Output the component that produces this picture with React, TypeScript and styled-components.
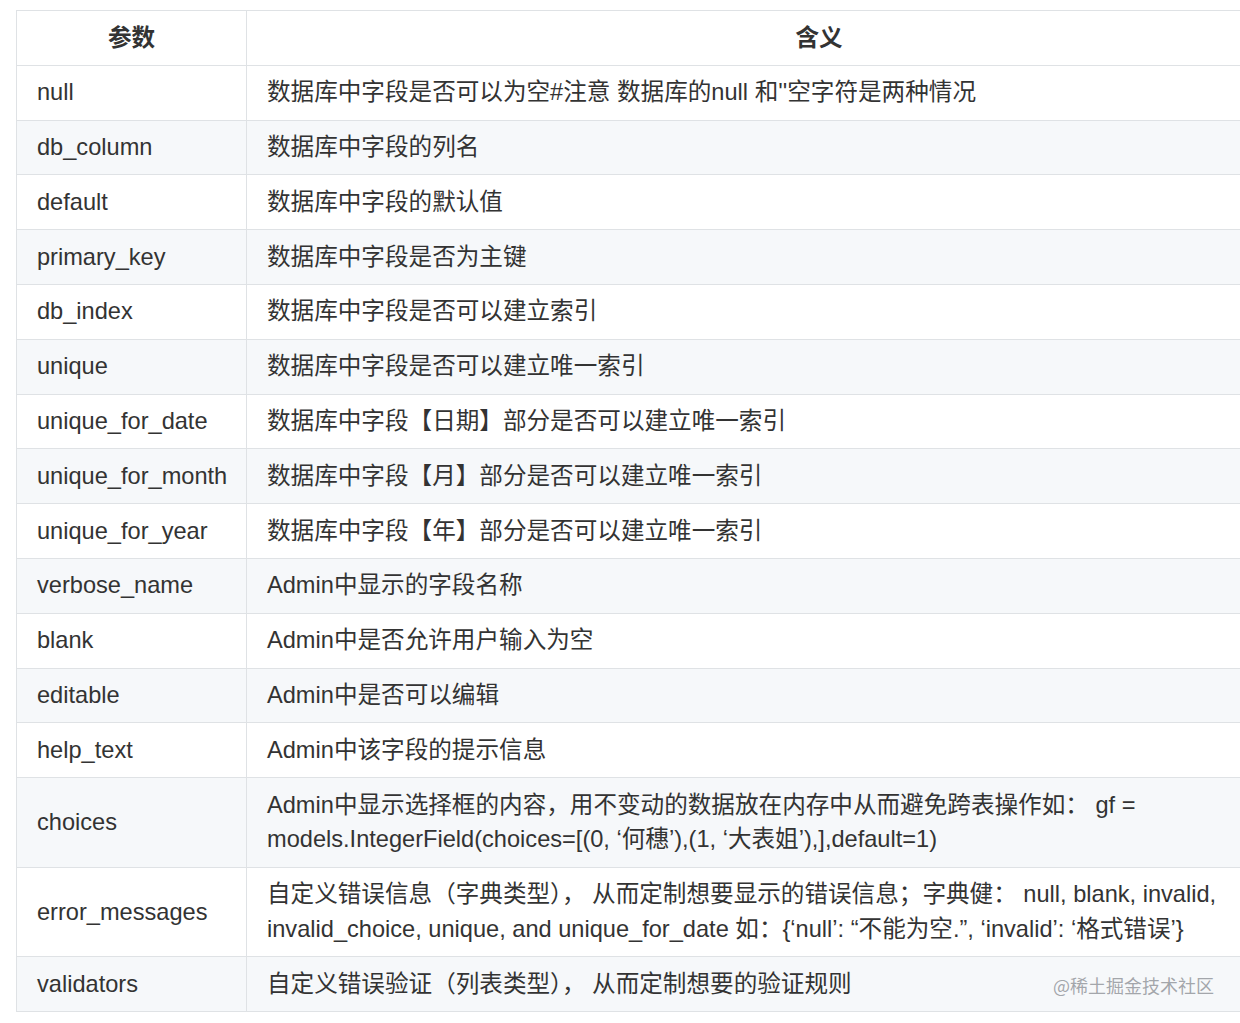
import React from "react";
import styled, { createGlobalStyle } from "styled-components";

const Global = createGlobalStyle`
  html, body { margin: 0; padding: 0; background: #ffffff; overflow: hidden; }
  body { width: 1240px; height: 1023px; }
`;

const Page = styled.div`
  position: relative;
  width: 1240px;
  height: 1023px;
  overflow: hidden;
  padding: 10px 0 0 16px;
  box-sizing: border-box;
  font-family: "Liberation Sans", "Noto Sans CJK SC", sans-serif;
  color: #333333;
`;

const Table = styled.table`
  border-collapse: collapse;
  border-spacing: 0;
  width: 1376px;
  table-layout: fixed;
  font-size: 23.6px;
  line-height: 34.8px;
`;

const Row = styled.tr<{ $alt?: boolean }>`
  background: ${(p) => (p.$alt ? "#f6f8fa" : "#ffffff")};
  border-top: 1px solid #dfe2e5;
`;

const HeadCell = styled.th<{ $w?: number }>`
  box-sizing: border-box;
  border: 1px solid #dfe2e5;
  padding: 9.5px 20px;
  font-weight: 700;
  text-align: center;
  color: #333333;
  ${(p) => (p.$w ? `width: ${p.$w}px;` : "")}
`;

const Cell = styled.td`
  border: 1px solid #dfe2e5;
  padding: 9.5px 20px;
  vertical-align: middle;
  word-break: normal;
`;

const Watermark = styled.div`
  position: absolute;
  left: 1053px;
  top: 972px;
  font-family: "Noto Sans CJK SC", sans-serif;
  font-size: 18px;
  line-height: 26px;
  color: #a3a6ab;
  text-shadow: 0 0 1px #ffffff;
`;

const rows: [string, string][] = [
  ["null", "数据库中字段是否可以为空#注意 数据库的null 和''空字符是两种情况"],
  ["db_column", "数据库中字段的列名"],
  ["default", "数据库中字段的默认值"],
  ["primary_key", "数据库中字段是否为主键"],
  ["db_index", "数据库中字段是否可以建立索引"],
  ["unique", "数据库中字段是否可以建立唯一索引"],
  ["unique_for_date", "数据库中字段【日期】部分是否可以建立唯一索引"],
  ["unique_for_month", "数据库中字段【月】部分是否可以建立唯一索引"],
  ["unique_for_year", "数据库中字段【年】部分是否可以建立唯一索引"],
  ["verbose_name", "Admin中显示的字段名称"],
  ["blank", "Admin中是否允许用户输入为空"],
  ["editable", "Admin中是否可以编辑"],
  ["help_text", "Admin中该字段的提示信息"],
  [
    "choices",
    "Admin中显示选择框的内容，用不变动的数据放在内存中从而避免跨表操作如： gf = models.IntegerField(choices=[(0, ‘何穗’),(1, ‘大表姐’),],default=1)",
  ],
  [
    "error_messages",
    "自定义错误信息（字典类型）， 从而定制想要显示的错误信息；字典健： null, blank, invalid, invalid_choice, unique, and unique_for_date 如：{‘null’: “不能为空.”, ‘invalid’: ‘格式错误’}",
  ],
  ["validators", "自定义错误验证（列表类型）， 从而定制想要的验证规则"],
];

export default function App() {
  return (
    <Page>
      <Global />
      <Table>
        <thead>
          <Row>
            <HeadCell $w={230}>参数</HeadCell>
            <HeadCell>含义</HeadCell>
          </Row>
        </thead>
        <tbody>
          {rows.map(([k, v], i) => (
            <Row key={k} $alt={i % 2 === 1}>
              <Cell>{k}</Cell>
              <Cell>{v}</Cell>
            </Row>
          ))}
        </tbody>
      </Table>
      <Watermark>@稀土掘金技术社区</Watermark>
    </Page>
  );
}
